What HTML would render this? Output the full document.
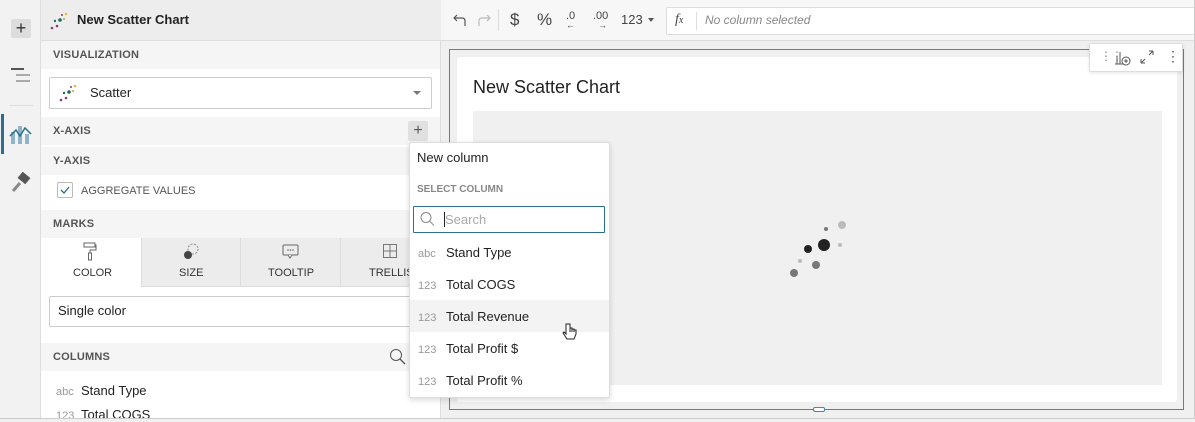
<!DOCTYPE html>
<html><head><meta charset="utf-8"><style>
*{box-sizing:border-box;margin:0;padding:0}
body{width:1195px;height:419px;overflow:hidden;font-family:"Liberation Sans",sans-serif;background:#f0f0f0;position:relative;color:#222}
.a{position:absolute}
.hdr{font-size:11px;font-weight:bold;color:#555;letter-spacing:.2px}
.t{font-size:13px;color:#222}
.n{font-size:11px;color:#999;display:inline-block;width:28px}
</style></head><body>
<div class="a" style="left:0;top:0;width:1195px;height:419px;border:1px solid #ccc;border-top:none;border-left:none;z-index:50;pointer-events:none"></div>
<div class="a" style="left:0;top:0;width:41px;height:419px;background:#f2f2f2;border-right:1px solid #ddd"></div>
<div class="a" style="left:11px;top:19px;width:20px;height:19px;background:#ddd;border-radius:2px;font-size:18px;line-height:18px;text-align:center;color:#333">+</div>
<svg class="a" style="left:10px;top:67px" width="22" height="20"><rect x="1" y="1" width="13" height="2" fill="#555"/><rect x="6" y="7" width="14" height="2" fill="#aaa"/><rect x="6" y="13" width="14" height="2" fill="#aaa"/></svg>
<div class="a" style="left:9px;top:105px;width:24px;height:1px;background:#ddd"></div>
<div class="a" style="left:1px;top:114px;width:3px;height:40px;background:#2a6f8f"></div>
<svg class="a" style="left:9px;top:122px" width="24" height="24"><rect x="2" y="10" width="4" height="12" fill="#8fb3c8"/><rect x="9" y="4" width="4" height="18" fill="#8fb3c8"/><rect x="16" y="12" width="4" height="10" fill="#8fb3c8"/><path d="M1 14 L7 8 L11 14 L16 6 L22 12" stroke="#2a6f8f" stroke-width="1.5" fill="none"/></svg>
<svg class="a" style="left:11px;top:172px" width="22" height="22"><rect x="8" y="2" width="10" height="8" transform="rotate(40 13 6)" fill="#555"/><path d="M9 11 L2 19" stroke="#888" stroke-width="3"/></svg>
<div class="a" style="left:41px;top:0;width:400px;height:419px;background:#fff;border-right:1px solid #ddd"></div>
<div class="a" style="left:41px;top:0;width:400px;height:41px;background:#ededed;border-bottom:1px solid #ddd"></div>
<svg class="a" style="left:49px;top:11px" width="22" height="20"><circle cx="3" cy="17" r="1.3" fill="#8a3b7a"/><circle cx="8" cy="15" r="1.3" fill="#8a3b7a"/><circle cx="6" cy="10" r="1.2" fill="#1e6d5c"/><circle cx="11" cy="9" r="1.8" fill="#1e6d5c"/><circle cx="15" cy="8" r="1" fill="#c6a13a"/><circle cx="17" cy="3" r="1.3" fill="#e2c044"/><circle cx="13" cy="4" r="1" fill="#8a3b7a"/></svg>
<div class="a" style="left:77px;top:12px;font-size:13px;font-weight:bold;color:#222">New Scatter Chart</div>
<div class="a" style="left:41px;top:41px;width:399px;height:28px;background:#f5f5f5"></div>
<div class="a hdr" style="left:53px;top:49px">VISUALIZATION</div>
<div class="a" style="left:49px;top:77px;width:383px;height:32px;border:1px solid #ccc;border-radius:2px"></div>
<svg class="a" style="left:58px;top:82px" width="22" height="22"><circle cx="3" cy="18" r="1.3" fill="#8a3b7a"/><circle cx="8" cy="16" r="1.3" fill="#8a3b7a"/><circle cx="6" cy="11" r="1.2" fill="#1e6d5c"/><circle cx="11" cy="10" r="1.8" fill="#1e6d5c"/><circle cx="15" cy="9" r="1" fill="#c6a13a"/><circle cx="17" cy="4" r="1.3" fill="#e2c044"/><circle cx="13" cy="5" r="1" fill="#8a3b7a"/></svg>
<div class="a t" style="left:90px;top:85px;font-size:13px">Scatter</div>
<div class="a" style="left:413px;top:91px;border:4px solid transparent;border-top:4px solid #777"></div>
<div class="a" style="left:41px;top:117px;width:399px;height:28px;background:#f5f5f5"></div>
<div class="a hdr" style="left:53px;top:125px">X-AXIS</div>
<div class="a" style="left:408px;top:121px;width:20px;height:20px;background:#e0e0e0;border-radius:2px;text-align:center;font-size:16px;line-height:19px;color:#555">+</div>
<div class="a" style="left:41px;top:147px;width:399px;height:28px;background:#f5f5f5"></div>
<div class="a hdr" style="left:53px;top:155px">Y-AXIS</div>
<div class="a" style="left:57px;top:182px;width:16px;height:16px;border:1px solid #bbb;border-radius:2px"></div>
<svg class="a" style="left:59px;top:184px" width="12" height="12"><path d="M2 6 L5 9 L10 3" stroke="#2a6f8f" stroke-width="1.3" fill="none"/></svg>
<div class="a" style="left:81px;top:185px;font-size:11px;color:#555">AGGREGATE VALUES</div>
<div class="a" style="left:41px;top:210px;width:399px;height:28px;background:#f5f5f5"></div>
<div class="a hdr" style="left:53px;top:218px">MARKS</div>
<div class="a" style="left:141px;top:238px;width:299px;height:49px;background:#ececec;border-bottom:1px solid #ddd"></div>
<div class="a" style="left:240px;top:238px;width:1px;height:49px;background:#ddd"></div>
<div class="a" style="left:340px;top:238px;width:1px;height:49px;background:#ddd"></div>
<div class="a" style="left:141px;top:238px;width:1px;height:49px;background:#ddd"></div>
<svg class="a" style="left:82px;top:242px" width="16" height="20"><rect x="2" y="1" width="11" height="4" fill="none" stroke="#666"/><path d="M13 3 h1 v5 h-6 v3" stroke="#666" fill="none"/><rect x="6.5" y="11" width="3" height="7" fill="none" stroke="#666"/></svg>
<div class="a" style="left:73px;top:267px;font-size:11px;color:#333">COLOR</div>
<svg class="a" style="left:181px;top:242px" width="20" height="20"><circle cx="12" cy="7" r="5" fill="none" stroke="#888" stroke-dasharray="2 1.5"/><circle cx="7" cy="13" r="4" fill="#444"/></svg>
<div class="a" style="left:179px;top:267px;font-size:11px;color:#333">SIZE</div>
<svg class="a" style="left:282px;top:244px" width="18" height="16"><rect x="1" y="1" width="15" height="10" rx="1" fill="none" stroke="#666"/><path d="M6 11 l2 3 l2 -3" stroke="#666" fill="#fff"/><circle cx="6" cy="6" r=".8" fill="#666"/><circle cx="8.5" cy="6" r=".8" fill="#666"/><circle cx="11" cy="6" r=".8" fill="#666"/></svg>
<div class="a" style="left:268px;top:267px;font-size:11px;color:#333">TOOLTIP</div>
<svg class="a" style="left:383px;top:244px" width="14" height="14"><rect x=".5" y=".5" width="13" height="13" fill="none" stroke="#777"/><path d="M7 0 v14 M0 7 h14" stroke="#777"/></svg>
<div class="a" style="left:369px;top:267px;font-size:11px;color:#333">TRELLIS</div>
<div class="a" style="left:49px;top:296px;width:383px;height:31px;border:1px solid #ccc;border-radius:2px"></div>
<div class="a t" style="left:58px;top:303px">Single color</div>
<div class="a" style="left:41px;top:343px;width:399px;height:28px;background:#f5f5f5"></div>
<div class="a hdr" style="left:53px;top:351px">COLUMNS</div>
<svg class="a" style="left:389px;top:348px" width="18" height="18"><circle cx="7" cy="7" r="5.5" fill="none" stroke="#555"/><path d="M11 11 L16 16" stroke="#555" stroke-width="1.3"/></svg>
<div class="a t" style="left:56px;top:383px"><span class="n" style="width:25px">abc</span>Stand Type</div>
<div class="a t" style="left:56px;top:407px"><span class="n" style="width:25px">123</span>Total COGS</div>
<div class="a" style="left:441px;top:0;width:754px;height:41px;background:#f7f7f7;border-bottom:1px solid #ddd"></div>
<svg class="a" style="left:452px;top:12px" width="16" height="16"><path d="M5 3 L2 6 L5 9 M2 6 H10 Q13 6 13 9 V14" stroke="#555" fill="none" stroke-width="1.2"/></svg>
<svg class="a" style="left:476px;top:12px" width="16" height="16"><path d="M11 3 L14 6 L11 9 M14 6 H6 Q3 6 3 9 V14" stroke="#bbb" fill="none" stroke-width="1.2"/></svg>
<div class="a" style="left:498px;top:9px;width:1px;height:22px;background:#ddd"></div>
<div class="a" style="left:510px;top:10px;font-size:17px;color:#444">$</div>
<div class="a" style="left:537px;top:10px;font-size:17px;color:#444">%</div>
<div class="a" style="left:566px;top:10px;font-size:11px;color:#444">.0</div>
<div class="a" style="left:566px;top:20px;font-size:9px;color:#444">&#8592;</div>
<div class="a" style="left:593px;top:10px;font-size:11px;color:#444">.00</div>
<div class="a" style="left:598px;top:20px;font-size:9px;color:#444">&#8594;</div>
<div class="a" style="left:621px;top:12px;font-size:13px;color:#444">123</div>
<div class="a" style="left:648px;top:18px;border:3px solid transparent;border-top:4px solid #555"></div>
<div class="a" style="left:666px;top:7px;width:529px;height:28px;background:#fff;border:1px solid #ddd;border-right:none;border-radius:2px"></div>
<div class="a" style="left:675px;top:12px;font-size:14px;color:#444;font-family:'Liberation Serif',serif;font-style:italic">f<span style="font-size:10px">x</span></div>
<div class="a" style="left:696px;top:12px;width:1px;height:18px;background:#ddd"></div>
<div class="a" style="left:705px;top:13px;font-size:12px;color:#888;font-style:italic">No column selected</div>
<div class="a" style="left:449px;top:49px;width:735px;height:361px;border:1px solid #3b8db5"></div>
<div class="a" style="left:457px;top:57px;width:720px;height:345px;background:#fff;border-radius:3px"></div>
<div class="a" style="left:473px;top:77px;font-size:18px;color:#222">New Scatter Chart</div>
<div class="a" style="left:473px;top:111px;width:689px;height:274px;background:#f0f0f0"></div>
<div class="a" style="left:813px;top:407px;width:12px;height:5px;background:#fff;border:1px solid #3b8db5;border-radius:2px"></div>
<div class="a" style="left:1089px;top:43px;width:94px;height:29px;background:#fff;border:1px solid #ddd;border-radius:2px;box-shadow:0 1px 3px rgba(0,0,0,.1)"></div>
<div class="a" style="left:1100px;top:49px;font-size:12px;color:#888;letter-spacing:-1px">&#8942;&#8942;</div>
<svg class="a" style="left:1113px;top:48px" width="20" height="20"><path d="M2 16 h12 M4 16 v-8 M7 16 v-12 M10 16 v-6" stroke="#555" fill="none"/><circle cx="13" cy="13" r="4" fill="#fff" stroke="#555"/><path d="M13 11 v4 M11 13 h4" stroke="#555"/></svg>
<svg class="a" style="left:1138px;top:48px" width="18" height="18"><path d="M3 15 L7 11 M3 15 v-4 M3 15 h4 M15 3 L11 7 M15 3 v4 M15 3 h-4" stroke="#555" fill="none"/></svg>
<div class="a" style="left:1166px;top:48px;font-size:14px;color:#555">&#8942;</div>
<svg class="a" style="left:760px;top:200px" width="120" height="90"><circle cx="82" cy="25" r="4" fill="#bbb"/><circle cx="66" cy="29" r="2" fill="#777"/><circle cx="64" cy="45" r="6" fill="#222"/><circle cx="80" cy="45" r="2" fill="#bbb"/><circle cx="48" cy="49" r="4" fill="#222"/><circle cx="40" cy="61" r="2" fill="#bbb"/><circle cx="56" cy="65" r="4" fill="#777"/><circle cx="34" cy="73" r="4" fill="#777"/></svg>
<div class="a" style="left:409px;top:142px;width:201px;height:256px;background:#fff;border:1px solid #ddd;border-radius:2px;box-shadow:0 2px 6px rgba(0,0,0,.15)"></div>
<div class="a t" style="left:417px;top:150px">New column</div>
<div class="a" style="left:417px;top:184px;font-size:10px;font-weight:bold;color:#888">SELECT COLUMN</div>
<div class="a" style="left:413px;top:206px;width:192px;height:27px;border:1px solid #2a6f8f;border-radius:1px"></div>
<svg class="a" style="left:419px;top:211px" width="16" height="16"><circle cx="7" cy="6.5" r="5" fill="none" stroke="#888"/><path d="M10.5 10 L15 14.5" stroke="#888"/></svg>
<div class="a" style="left:444px;top:212px;width:1px;height:15px;background:#222"></div>
<div class="a" style="left:445px;top:212px;font-size:13px;color:#aaa">Search</div>
<div class="a" style="left:410px;top:300px;width:199px;height:32px;background:#f3f3f3"></div>
<div class="a t" style="left:418px;top:245px"><span class="n">abc</span>Stand Type</div>
<div class="a t" style="left:418px;top:277px"><span class="n">123</span>Total COGS</div>
<div class="a t" style="left:418px;top:309px"><span class="n">123</span>Total Revenue</div>
<div class="a t" style="left:418px;top:341px"><span class="n">123</span>Total Profit $</div>
<div class="a t" style="left:418px;top:373px"><span class="n">123</span>Total Profit %</div>
<svg class="a" style="left:562px;top:322px" width="16" height="20"><path d="M4 2 v10 l-2-2 l-1 1 l4 6 h7 l2-5 v-4 h-2 v2 v-3 h-2 v3 v-4 h-2 v4 v-8 z" fill="#fff" stroke="#222" stroke-width="1"/></svg>
</body></html>
